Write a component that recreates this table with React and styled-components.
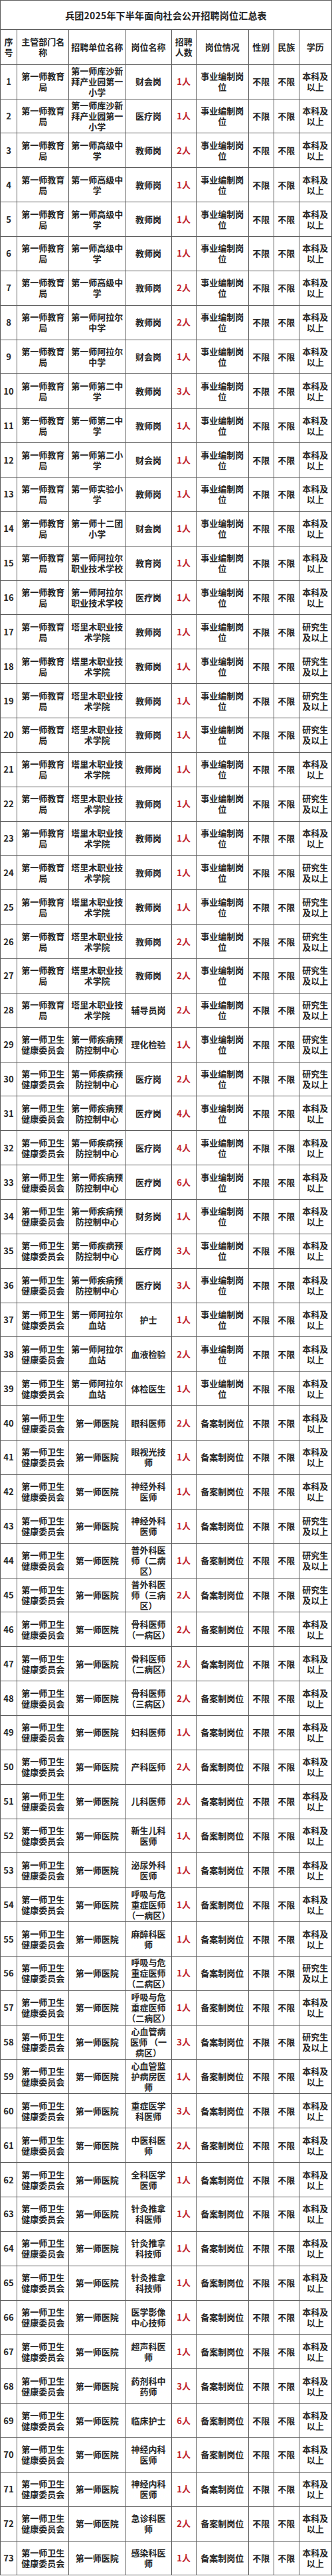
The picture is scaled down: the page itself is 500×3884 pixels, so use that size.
import React from 'react';
import styled, { createGlobalStyle } from 'styled-components';

const GlobalStyle = createGlobalStyle`
  html, body {
    margin: 0;
    padding: 0;
    background: #ffffff;
  }
  body {
    font-family: "Noto Sans CJK SC", "Noto Sans", sans-serif;
    color: #1f1f1f;
  }
`;

const LINE = '#5c5c5c';

const EDU = '第一师教育局';
const HEALTH = '第一师卫生健康委员会';
const BEN = '本科及以上';
const YAN = '研究生及以上';
const SHIYE = '事业编制岗位';
const BEIAN = '备案制岗位';
const KUSHA = '第一师库沙新拜产业园第一小学';
const GAOJI = '第一师高级中学';
const TALIMU = '塔里木职业技术学院';
const JIKONG = '第一师疾病预防控制中心';
const XUEZHAN = '第一师阿拉尔血站';
const YIYUAN = '第一师医院';

// [主管部门, 招聘单位, 岗位名称, 人数, 岗位情况, 学历]
const rows = [
  [EDU, KUSHA, '财会岗', 1, SHIYE, BEN],
  [EDU, KUSHA, '医疗岗', 1, SHIYE, BEN],
  [EDU, GAOJI, '教师岗', 2, SHIYE, BEN],
  [EDU, GAOJI, '教师岗', 1, SHIYE, BEN],
  [EDU, GAOJI, '教师岗', 1, SHIYE, BEN],
  [EDU, GAOJI, '教师岗', 1, SHIYE, BEN],
  [EDU, GAOJI, '教师岗', 2, SHIYE, BEN],
  [EDU, '第一师阿拉尔中学', '教师岗', 2, SHIYE, BEN],
  [EDU, '第一师阿拉尔中学', '财会岗', 1, SHIYE, BEN],
  [EDU, '第一师第二中学', '教师岗', 3, SHIYE, BEN],
  [EDU, '第一师第二中学', '教师岗', 1, SHIYE, BEN],
  [EDU, '第一师第二小学', '财会岗', 1, SHIYE, BEN],
  [EDU, '第一师实验小学', '教师岗', 1, SHIYE, BEN],
  [EDU, '第一师十二团小学', '财会岗', 1, SHIYE, BEN],
  [EDU, '第一师阿拉尔职业技术学校', '教育岗', 1, SHIYE, BEN],
  [EDU, '第一师阿拉尔职业技术学校', '医疗岗', 1, SHIYE, BEN],
  [EDU, TALIMU, '教师岗', 1, SHIYE, YAN],
  [EDU, TALIMU, '教师岗', 1, SHIYE, YAN],
  [EDU, TALIMU, '教师岗', 1, SHIYE, YAN],
  [EDU, TALIMU, '教师岗', 1, SHIYE, YAN],
  [EDU, TALIMU, '教师岗', 1, SHIYE, BEN],
  [EDU, TALIMU, '教师岗', 1, SHIYE, YAN],
  [EDU, TALIMU, '教师岗', 1, SHIYE, BEN],
  [EDU, TALIMU, '教师岗', 1, SHIYE, YAN],
  [EDU, TALIMU, '教师岗', 1, SHIYE, YAN],
  [EDU, TALIMU, '教师岗', 2, SHIYE, YAN],
  [EDU, TALIMU, '教师岗', 2, SHIYE, YAN],
  [EDU, TALIMU, '辅导员岗', 2, SHIYE, YAN],
  [HEALTH, JIKONG, '理化检验', 1, SHIYE, YAN],
  [HEALTH, JIKONG, '医疗岗', 2, SHIYE, YAN],
  [HEALTH, JIKONG, '医疗岗', 4, SHIYE, BEN],
  [HEALTH, JIKONG, '医疗岗', 4, SHIYE, BEN],
  [HEALTH, JIKONG, '医疗岗', 6, SHIYE, BEN],
  [HEALTH, JIKONG, '财务岗', 1, SHIYE, BEN],
  [HEALTH, JIKONG, '医疗岗', 3, SHIYE, BEN],
  [HEALTH, JIKONG, '医疗岗', 3, SHIYE, BEN],
  [HEALTH, XUEZHAN, '护士', 1, SHIYE, BEN],
  [HEALTH, XUEZHAN, '血液检验', 2, SHIYE, BEN],
  [HEALTH, XUEZHAN, '体检医生', 1, SHIYE, BEN],
  [HEALTH, YIYUAN, '眼科医师', 2, BEIAN, BEN],
  [HEALTH, YIYUAN, '眼视光技师', 1, BEIAN, BEN],
  [HEALTH, YIYUAN, '神经外科医师', 1, BEIAN, BEN],
  [HEALTH, YIYUAN, '神经外科医师', 1, BEIAN, YAN],
  [HEALTH, YIYUAN, '普外科医师（二病区）', 1, BEIAN, YAN],
  [HEALTH, YIYUAN, '普外科医师（三病区）', 2, BEIAN, YAN],
  [HEALTH, YIYUAN, '骨科医师（一病区）', 2, BEIAN, BEN],
  [HEALTH, YIYUAN, '骨科医师（二病区）', 2, BEIAN, BEN],
  [HEALTH, YIYUAN, '骨科医师（三病区）', 2, BEIAN, BEN],
  [HEALTH, YIYUAN, '妇科医师', 1, BEIAN, BEN],
  [HEALTH, YIYUAN, '产科医师', 2, BEIAN, BEN],
  [HEALTH, YIYUAN, '儿科医师', 2, BEIAN, BEN],
  [HEALTH, YIYUAN, '新生儿科医师', 1, BEIAN, BEN],
  [HEALTH, YIYUAN, '泌尿外科医师', 1, BEIAN, BEN],
  [HEALTH, YIYUAN, '呼吸与危重症医师（一病区）', 1, BEIAN, BEN],
  [HEALTH, YIYUAN, '麻醉科医师', 1, BEIAN, BEN],
  [HEALTH, YIYUAN, '呼吸与危重症医师（二病区）', 1, BEIAN, YAN],
  [HEALTH, YIYUAN, '呼吸与危重症医师（二病区）', 1, BEIAN, BEN],
  [HEALTH, YIYUAN, '心血管病医师 （一病区）', 3, BEIAN, YAN],
  [HEALTH, YIYUAN, '心血管监护病房医师', 1, BEIAN, BEN],
  [HEALTH, YIYUAN, '重症医学科医师', 3, BEIAN, BEN],
  [HEALTH, YIYUAN, '中医科医师', 2, BEIAN, BEN],
  [HEALTH, YIYUAN, '全科医学医师', 1, BEIAN, BEN],
  [HEALTH, YIYUAN, '针灸推拿科医师', 1, BEIAN, BEN],
  [HEALTH, YIYUAN, '针灸推拿科技师', 1, BEIAN, BEN],
  [HEALTH, YIYUAN, '针灸推拿科技师', 1, BEIAN, BEN],
  [HEALTH, YIYUAN, '医学影像中心技师', 1, BEIAN, BEN],
  [HEALTH, YIYUAN, '超声科医师', 1, BEIAN, BEN],
  [HEALTH, YIYUAN, '药剂科中药师', 3, BEIAN, BEN],
  [HEALTH, YIYUAN, '临床护士', 6, BEIAN, BEN],
  [HEALTH, YIYUAN, '神经内科医师', 1, BEIAN, BEN],
  [HEALTH, YIYUAN, '神经内科医师', 1, BEIAN, BEN],
  [HEALTH, YIYUAN, '急诊科医师', 2, BEIAN, BEN],
  [HEALTH, YIYUAN, '感染科医师', 1, BEIAN, BEN],
];

const headers = ['序号', '主管部门名称', '招聘单位名称', '岗位名称', '招聘人数', '岗位情况', '性别', '民族', '学历'];

export default function App() {
  return (
    <>
      <GlobalStyle />
      <Sheet>
        <TitleBar>兵团2025年下半年面向社会公开招聘岗位汇总表</TitleBar>
        <Row $height={52.7}>
          {headers.map((h) => (
            <Cell key={h}>{h}</Cell>
          ))}
        </Row>
        {rows.map(([dept, unit, post, count, kind, edu], i) => (
          <Row key={i} $height={51.86}>
            <Cell>{i + 1}</Cell>
            <Cell>{dept}</Cell>
            <Cell>{unit}</Cell>
            <Cell>{post}</Cell>
            <Cell $red>{count}人</Cell>
            <Cell>{kind}</Cell>
            <Cell>不限</Cell>
            <Cell>不限</Cell>
            <Cell>{edu}</Cell>
          </Row>
        ))}
      </Sheet>
    </>
  );
}

const Sheet = styled.section`
  width: 500px;
  box-sizing: border-box;
  border-top: 1px solid ${LINE};
  border-left: 1px solid ${LINE};
  background: #fff;
`;

const TitleBar = styled.h1`
  margin: 0;
  height: 44px;
  box-sizing: border-box;
  display: flex;
  align-items: center;
  justify-content: center;
  border-right: 1px solid ${LINE};
  border-bottom: 1px solid ${LINE};
  font-size: 14px;
  font-weight: 700;
  color: #222;
  letter-spacing: 0.2px;
`;

const Row = styled.div`
  display: grid;
  grid-template-columns: 25px 78.3px 85px 69.4px 37px 79px 38px 38px 1fr;
  height: ${(p) => p.$height}px;
`;

const Cell = styled.div`
  box-sizing: border-box;
  display: flex;
  align-items: safe center;
  justify-content: center;
  text-align: center;
  overflow: hidden;
  padding: 0 2px;
  border-right: 1px solid ${LINE};
  border-bottom: 1px solid ${LINE};
  font-size: 13px;
  line-height: 16px;
  font-weight: 700;
  color: ${(p) => (p.$red ? '#c1232b' : '#262626')};
`;
